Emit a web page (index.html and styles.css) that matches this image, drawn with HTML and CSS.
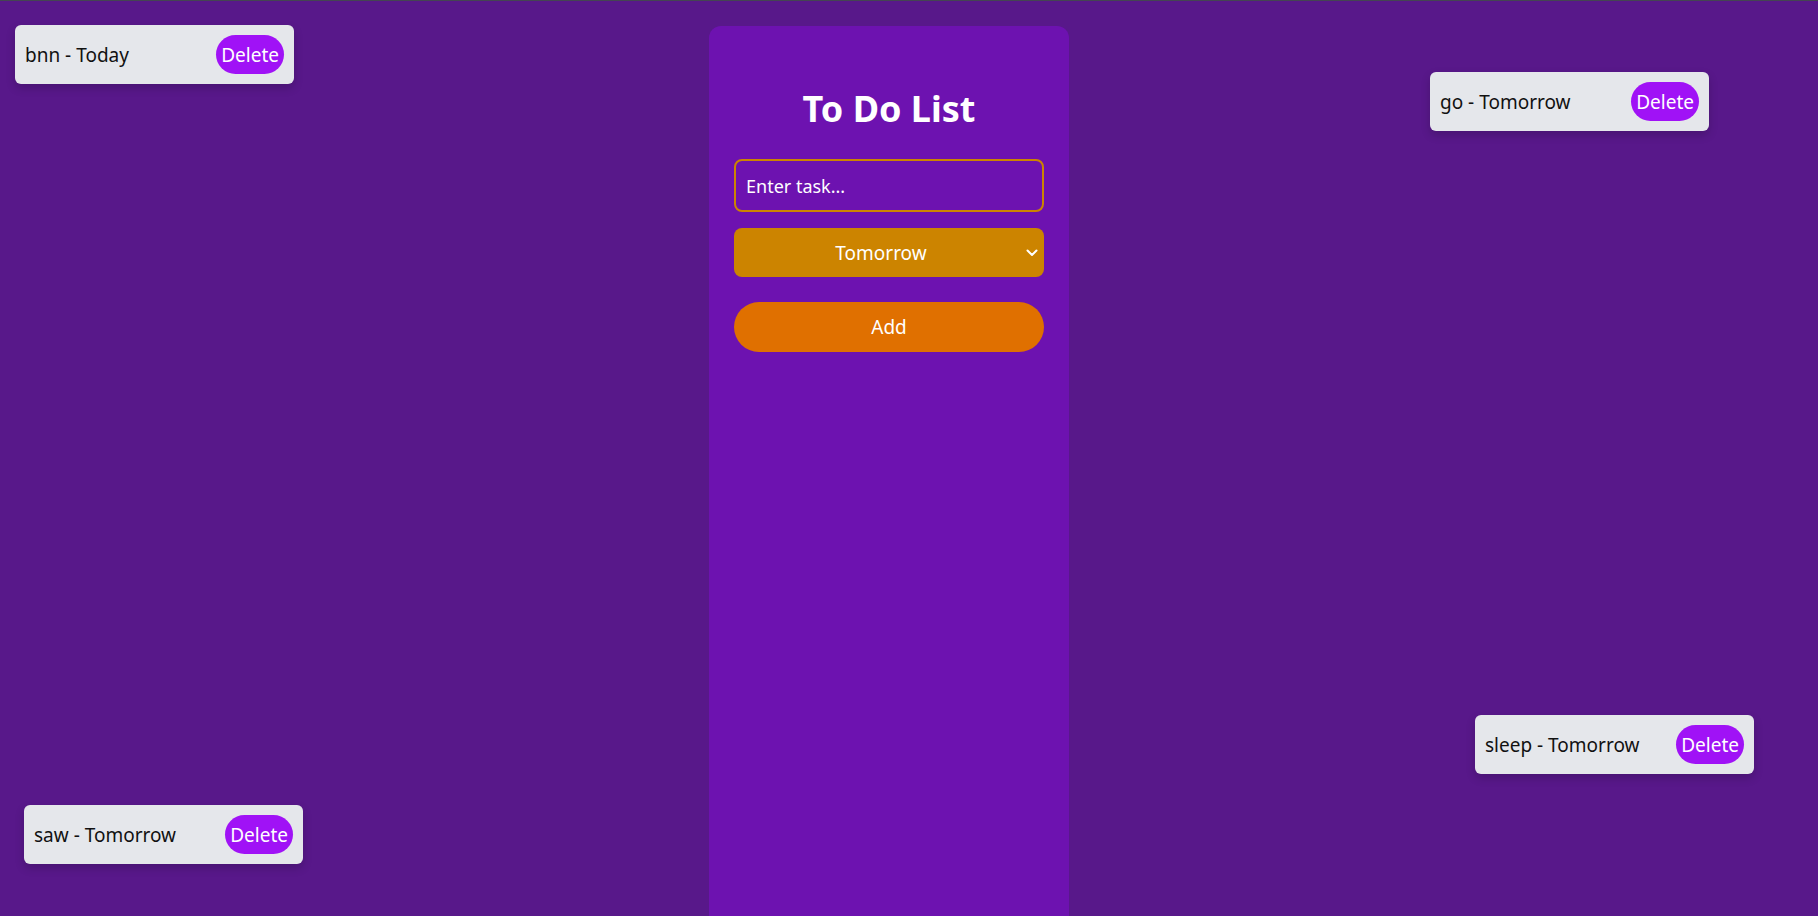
FILE: index.html
```html
<!DOCTYPE html>
<html lang="en">
<head>
<meta charset="utf-8">
<title>To Do List</title>
<link rel="stylesheet" href="styles.css">
</head>
<body>
<main class="panel">
  <h1 class="title">To Do List</h1>
  <input class="task-input" type="text" placeholder="Enter task...">
  <div class="select-wrap">
    <select class="day-select">
      <option>Today</option>
      <option selected>Tomorrow</option>
    </select>
    <svg class="chev" width="12" height="8" viewBox="0 0 12 8"><path d="M1.5 1.5 L6 6 L10.5 1.5" fill="none" stroke="#fff" stroke-width="2" stroke-linecap="round" stroke-linejoin="round"/></svg>
  </div>
  <button class="add-btn">Add</button>
</main>

<div class="task task-a"><span class="task-text">bnn - Today</span><button class="del-btn">Delete</button></div>
<div class="task task-b"><span class="task-text">go - Tomorrow</span><button class="del-btn">Delete</button></div>
<div class="task task-c"><span class="task-text">sleep - Tomorrow</span><button class="del-btn">Delete</button></div>
<div class="task task-d"><span class="task-text">saw - Tomorrow</span><button class="del-btn">Delete</button></div>
</body>
</html>
```

FILE: styles.css
```css
html, body {
  margin: 0;
  padding: 0;
}
body {
  background: #58188a;
  border-top: 1px solid #444452;
  height: 915px;
  overflow: hidden;
  position: relative;
  font-family: "Noto Sans", "Open Sans", sans-serif;
}
.panel {
  width: 310px;
  margin: 25px 0 0 709px;
  padding: 25px 25px 0;
  height: 865px;
  background: #6d12b0;
  border-radius: 12px 12px 0 0;
  display: flex;
  flex-direction: column;
}
.title {
  margin: 34px 0 26px;
  text-align: center;
  color: #fff;
  font-size: 36px;
  font-weight: 700;
  line-height: 48px;
}
.task-input {
  box-sizing: border-box;
  height: 53px;
  width: 100%;
  border: 2px solid #cc8400;
  border-radius: 8px;
  background: transparent;
  padding: 0 10px;
  color: #fff;
  font-family: inherit;
  font-size: 18px;
  outline: none;
}
.task-input::placeholder {
  color: #fff;
  opacity: 1;
}
.select-wrap {
  position: relative;
  margin-top: 16px;
}
.day-select {
  appearance: none;
  -webkit-appearance: none;
  width: 100%;
  height: 49px;
  border: none;
  border-radius: 8px;
  background: #cc8400;
  color: #fff;
  font-family: inherit;
  font-size: 19px;
  text-align: center;
  text-align-last: center;
  padding: 0 16px 0 0;
}
.chev {
  position: absolute;
  right: 6px;
  top: 21px;
  pointer-events: none;
}
.add-btn {
  margin-top: 25px;
  height: 50px;
  border: none;
  border-radius: 25px;
  background: #e07000;
  color: #fff;
  font-family: inherit;
  font-size: 19px;
}
.task {
  position: absolute;
  box-sizing: border-box;
  width: 279px;
  height: 59px;
  padding: 0 10px;
  display: flex;
  align-items: center;
  justify-content: space-between;
  background: #e5e7eb;
  border-radius: 6px;
  box-shadow: 0 4px 10px rgba(0, 0, 0, 0.18);
}
.task-text {
  color: #111;
  font-size: 19px;
}
.del-btn {
  height: 39px;
  padding: 0 5px;
  border: none;
  border-radius: 20px;
  background: #a012f6;
  color: #fff;
  font-family: inherit;
  font-size: 19px;
}
.task-a { left: 15px; top: 24px; }
.task-b { left: 1430px; top: 71px; }
.task-c { left: 1475px; top: 714px; }
.task-d { left: 24px; top: 804px; }
```
